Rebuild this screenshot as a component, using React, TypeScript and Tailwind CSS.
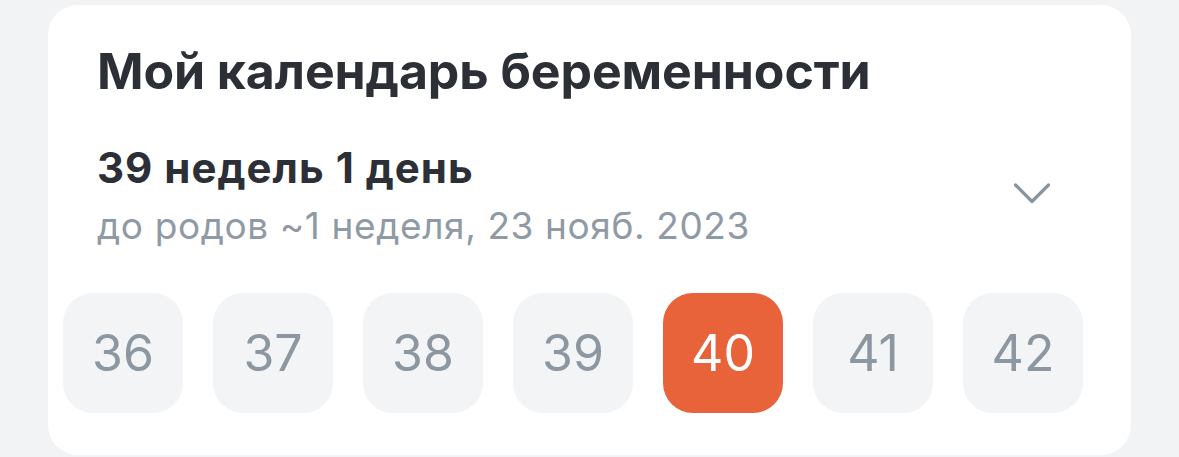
import React from "react";

const weeks = [36, 37, 38, 39, 40, 41, 42];
const current = 40;

function Chevron() {
  return (
    <svg width="38" height="22" viewBox="0 0 38 22" fill="none">
      <polyline
        points="2.5,3 19,19.5 35.5,3"
        stroke="#8a949f"
        strokeWidth="3.2"
        strokeLinecap="round"
        strokeLinejoin="round"
      />
    </svg>
  );
}

export default function App() {
  return (
    <div
      className="w-[1179px] h-[457px] bg-[#f2f3f5] pt-[5px] pl-[48px] overflow-hidden"
      style={{ fontFamily: "Inter, 'Noto Sans', sans-serif" }}
    >
      <div className="w-[1083px] h-[450px] bg-white rounded-[30px] flex flex-col">
        <h1 className="pl-[49px] pt-[36px] text-[50px] leading-[60px] font-bold text-[#2c3036] tracking-[-0.1px]">
          Мой календарь беременности
        </h1>

        <div className="flex items-start mt-[43px] pl-[49px] pr-[80px]">
          <div className="flex-1 flex flex-col">
            <div className="text-[42px] leading-[48px] font-bold text-[#2c3036] tracking-[1px]">
              39 недель 1 день
            </div>
            <div className="mt-[10px] text-[37px] leading-[48px] text-[#8f9aa5] tracking-[0.6px]">
              до родов ~1 неделя, 23 нояб. 2023
            </div>
          </div>
          <div className="mt-[38px]">
            <Chevron />
          </div>
        </div>

        <div className="flex gap-[30px] pl-[15px] mt-[43px]">
          {weeks.map((w) => (
            <div
              key={w}
              className={
                w === current
                  ? "w-[120px] h-[120px] rounded-[30px] bg-[#e9633a] flex items-center justify-center text-[50px] text-white"
                  : "w-[120px] h-[120px] rounded-[30px] bg-[#f2f4f6] flex items-center justify-center text-[50px] text-[#8c97a2]"
              }
            >
              {w}
            </div>
          ))}
        </div>
      </div>
    </div>
  );
}
